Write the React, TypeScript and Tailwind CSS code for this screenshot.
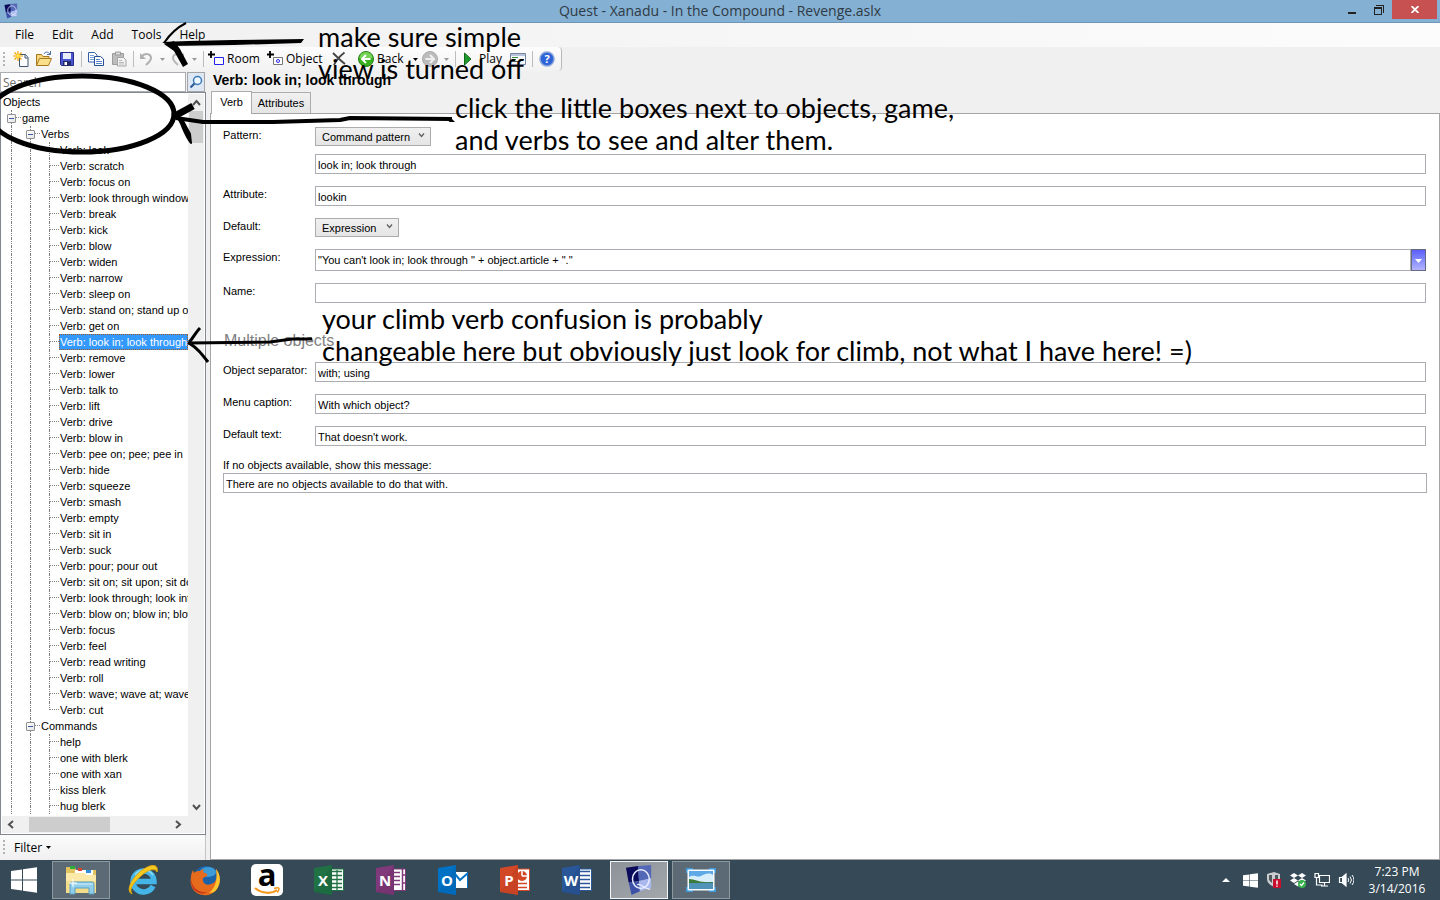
import type { ReactNode } from 'react';
import { clsx } from 'clsx';

const UI = "font-['Open_Sans','Noto_Sans',sans-serif]";
const FORM = "font-['Liberation_Sans',Arial,sans-serif]";

const verbs = [
  'look',
  'scratch',
  'focus on',
  'look through window',
  'break',
  'kick',
  'blow',
  'widen',
  'narrow',
  'sleep on',
  'stand on; stand up on',
  'get on',
  'look in; look through',
  'remove',
  'lower',
  'talk to',
  'lift',
  'drive',
  'blow in',
  'pee on; pee; pee in',
  'hide',
  'squeeze',
  'smash',
  'empty',
  'sit in',
  'suck',
  'pour; pour out',
  'sit on; sit upon; sit down',
  'look through; look into',
  'blow on; blow in; blow out',
  'focus',
  'feel',
  'read writing',
  'roll',
  'wave; wave at; wave to',
  'cut',
];

const commands = ['help', 'one with blerk', 'one with xan', 'kiss blerk', 'hug blerk'];

function QuestLogo({ className }: { className?: string }) {
  return (
    <svg viewBox="0 0 30 34" className={className} aria-hidden="true">
      <path d="M1 4 14 2 15 18 4 20Z" fill="#0b0b5c" />
      <path d="M14 2 28 1 28 15 15 18Z" fill="#5468b8" />
      <path d="M4 20 15 18 16 29 7 33Z" fill="#3c50a8" />
      <path d="M15 18 28 15 28 25 16 29Z" fill="#a9b8ee" />
      <ellipse cx="17" cy="16" rx="9" ry="10" fill="none" stroke="#e8ecff" strokeWidth="1.6" />
      <path d="M13 22c4-2 6 4 14 5" fill="none" stroke="#e8ecff" strokeWidth="1.6" />
    </svg>
  );
}

function TitleBar() {
  return (
    <header className={clsx(UI, 'flex h-[23px] shrink-0 items-start border-b border-[#6f95b5] bg-[#84b0d3]')}>
      <div className="flex w-[104px] pt-[3px] pl-[3px]">
        <QuestLogo className="h-4 w-4" />
      </div>
      <h1 className="flex-1 text-center text-[14px] leading-[22px] text-[#2f3a44]">
        Quest - Xanadu - In the Compound - Revenge.aslx
      </h1>
      <div className="flex w-[104px] justify-end pr-[3px]">
        <button aria-label="Minimize" className="flex h-[19px] w-[26px] items-center justify-center">
          <svg width="8" height="10" aria-hidden="true">
            <path d="M0 7h8v2H0z" fill="#222" />
          </svg>
        </button>
        <button aria-label="Restore" className="flex h-[19px] w-[27px] items-center justify-center">
          <svg width="10" height="10" fill="none" stroke="#222" shapeRendering="crispEdges" aria-hidden="true">
            <path d="M.5 2.5h7v7h-7zM0 3.5h8M2 .5h7.5V8" />
          </svg>
        </button>
        <button aria-label="Close" className="flex h-[19px] w-[45px] items-center justify-center bg-[#c75050]">
          <svg width="8" height="7" stroke="#fff" strokeWidth="1.8" aria-hidden="true">
            <path d="M.5 0 7.5 7M7.5 0 .5 7" />
          </svg>
        </button>
      </div>
    </header>
  );
}

function MenuBar() {
  return (
    <nav className={clsx(UI, 'flex h-6 shrink-0 items-center gap-[18px] bg-linear-to-r from-[#f0f0f0] to-[#fcfcfc] pl-[15px] text-[12px] leading-6')}>
      {['File', 'Edit', 'Add', 'Tools', 'Help'].map((item) => (
        <button key={item}>{item}</button>
      ))}
    </nav>
  );
}

function Grip() {
  return (
    <svg width="3" height="15" className="mx-[3px] shrink-0" fill="#b4b4b4" aria-hidden="true">
      <path d="M0 0h2v2H0zM0 4h2v2H0zM0 8h2v2H0zM0 12h2v2H0z" />
    </svg>
  );
}

function Caret({ color = '#000' }: { color?: string }) {
  return (
    <svg width="5" height="3" className="shrink-0" aria-hidden="true">
      <path d="M0 0h5L2.500 3z" fill={color} />
    </svg>
  );
}

function Separator() {
  return (
    <div className="flex w-[6px] shrink-0 justify-center">
      <div className="h-4 w-px bg-[#bdbdbd]" />
    </div>
  );
}

function ToolButton({ label, className, children }: { label: string; className?: string; children: ReactNode }) {
  return (
    <button title={label} aria-label={label} className={clsx('flex h-[23px] shrink-0 items-center', className ?? 'w-[23px] justify-center')}>
      {children}
    </button>
  );
}

function Icon({ children }: { children: ReactNode }) {
  return (
    <svg width="16" height="16" viewBox="0 0 16 16" className="shrink-0" fill="none" aria-hidden="true">
      {children}
    </svg>
  );
}

function Toolbar() {
  return (
    <div role="toolbar" className={clsx(UI, 'flex h-6 w-[562px] shrink-0 items-center rounded-r-sm border-r border-[#b9b9b9] bg-linear-to-b from-[#fdfdfd] to-[#f2f2f2] text-[12px]')}>
      <Grip />
      <ToolButton label="New">
        <Icon>
          <path d="M6.500 3.500h6l2.500 3v9H6.500z" fill="#fff" stroke="#3f566e" />
          <path d="M12 3.500V7h3" stroke="#3f566e" fill="#dce8f5" />
          <path d="M5 0v10M0 5h10M1.500 1.500l7 7M8.500 1.500l-7 7" stroke="#f5a300" strokeWidth="1.2" />
          <circle cx="5" cy="5" r="2" fill="#ffe14a" />
        </Icon>
      </ToolButton>
      <ToolButton label="Open">
        <Icon>
          <path d="M.5 14.500v-11h5l1.500 2h6v3" fill="#f5d67a" stroke="#a8781c" />
          <path d="M.5 14.500 3.500 7.500h12l-3 7z" fill="#fbe08c" stroke="#a8781c" />
          <path d="M8 3c1-2.500 4-2.500 6 0M14.500 0v3.500H11" stroke="#4a6f9e" />
        </Icon>
      </ToolButton>
      <ToolButton label="Save">
        <Icon>
          <path d="M1.500 1.500h13v13h-12l-1-1z" fill="#4a56cf" stroke="#262b8c" />
          <path d="M4 2h8v6H4z" fill="#e9eefb" />
          <path d="M4 10h8v5H4z" fill="#262b6c" />
          <path d="M5.500 11h2.500v3H5.500z" fill="#fff" />
        </Icon>
      </ToolButton>
      <Separator />
      <ToolButton label="Copy">
        <Icon>
          <path d="M.5 1.500h6l2.500 2.500v7H.5z" fill="#fff" stroke="#3560a8" />
          <path d="M2 4.500h4M2 6.500h5M2 8.500h5" stroke="#7ba0dc" />
          <path d="M6.500 5.500h6L15.500 8v6.500h-9z" fill="#fff" stroke="#274f99" />
          <path d="M8 8.500h4M8 10.500h6M8 12.500h6" stroke="#5884cc" />
        </Icon>
      </ToolButton>
      <ToolButton label="Paste">
        <Icon>
          <path d="M1.500 2.500h11v11h-11z" fill="#bdbdbd" stroke="#9c9c9c" />
          <path d="M4.500 1h5v3h-5z" fill="#ddd" stroke="#999" />
          <path d="M6.500 6.500h6l2.500 2.500v6H6.500z" fill="#f2f2f2" stroke="#a5a5a5" />
          <path d="M8 9.500h3M8 11.500h5M8 13h5" stroke="#bbb" />
        </Icon>
      </ToolButton>
      <Separator />
      <ToolButton label="Undo" className="w-8 gap-[6px] pl-[2px]">
        <Icon>
          <path d="M3 6C7 1 13 3 13 7c0 3-3 5-5 7" stroke="#b0b0b0" strokeWidth="2" />
          <path d="M2 2v6h6z" fill="#b0b0b0" />
        </Icon>
        <Caret color="#9a9a9a" />
      </ToolButton>
      <ToolButton label="Redo" className="w-8 gap-[6px] pl-[2px]">
        <Icon>
          <path d="M13 6C9 1 3 3 3 7c0 3 3 5 5 7" stroke="#b8b8b8" strokeWidth="2" />
          <path d="M14 2v6H8z" fill="#b8b8b8" />
        </Icon>
        <Caret color="#9a9a9a" />
      </ToolButton>
      <Separator />
      <ToolButton label="Add room" className="w-[59px] gap-[3px] pl-[2px]">
        <Icon>
          <path d="M3 0v7M0 3.500h7" stroke="#000" strokeWidth="1.800" />
          <path d="M6.500 6.500h9v7h-9z" fill="#fff" stroke="#2222f0" />
        </Icon>
        Room
      </ToolButton>
      <ToolButton label="Add object" className="w-[62px] gap-[3px] pl-[2px]">
        <Icon>
          <path d="M3 0v7M0 3.500h7" stroke="#000" strokeWidth="1.800" />
          <path d="M6.500 6.500h9v7h-9z" fill="#fff" stroke="#777" />
          <circle cx="11" cy="10" r="1.500" stroke="#2222f0" />
        </Icon>
        Object
      </ToolButton>
      <ToolButton label="Delete">
        <Icon>
          <path d="M2 2c4 4 8 8 12 11M13.500 1.500C9 5 5 9 3 14" stroke="#444" strokeWidth="1.800" />
        </Icon>
      </ToolButton>
      <ToolButton label="Back" className="ml-[6px] w-[62px] gap-[3px] pl-[2px]">
        <Icon>
          <circle cx="8" cy="8" r="7.500" fill="#38b01e" stroke="#26821a" />
          <path d="M1.500 7a6.500 6 0 0 1 13 0z" fill="#74d354" />
          <path d="M12.500 8H4.500M8 4 4 8l4 4" stroke="#fff" strokeWidth="2" />
        </Icon>
        <span className="flex-1 text-left">Back</span>
        <Caret />
      </ToolButton>
      <ToolButton label="Forward" className="w-[34px] gap-[6px] pl-1">
        <Icon>
          <circle cx="8" cy="8" r="7.500" fill="#bcbcbc" stroke="#a9a9a9" />
          <path d="M3.500 8h8M8 4l4 4-4 4" stroke="#f0f0f0" strokeWidth="2" />
        </Icon>
        <Caret color="#9a9a9a" />
      </ToolButton>
      <Separator />
      <ToolButton label="Play" className="w-[48px] gap-[3px] pl-[2px]">
        <Icon>
          <path d="M4.500 2 11 8l-6.500 6z" fill="#1f9a2d" stroke="#106b1c" />
        </Icon>
        Play
      </ToolButton>
      <ToolButton label="Log">
        <Icon>
          <path d="M.5 2.500h15v11H.5z" fill="#f5f8ff" stroke="#7885a0" />
          <path d="M1 3h14v2H1z" fill="#b8c5dc" />
          <path d="M2 6.500h6M2 8.500h4" stroke="#3c8a3c" />
          <path d="M2 10.500h7M10 8.500h4" stroke="#555" />
        </Icon>
      </ToolButton>
      <Separator />
      <ToolButton label="Help">
        <Icon>
          <circle cx="8" cy="8" r="7" fill="#2e63d8" stroke="#8aa5d8" strokeWidth="1.500" />
          <text x="8" y="12" textAnchor="middle" fontSize="11" fontWeight="bold" fill="#fff">?</text>
        </Icon>
      </ToolButton>
    </div>
  );
}

/* One 19px column of the tree's dotted guide lines */
function Guide({ top, bottom, branch, box }: { top?: boolean; bottom?: boolean; branch?: boolean; box?: boolean }) {
  return (
    <span className="relative flex h-4 w-[19px] shrink-0 pl-[9px]">
      <span className="flex flex-1 flex-col">
        <span className={clsx('h-2 border-dotted border-[#808080]', top && 'border-l', branch && 'border-b')} />
        <span className={clsx('h-2 border-dotted border-[#808080]', bottom && 'border-l')} />
      </span>
      {box && (
        <button aria-label="Collapse" className="absolute top-1 left-[5px] flex h-[9px] w-[9px] items-center justify-center rounded-[1px] border border-[#919191] bg-linear-to-br from-white to-[#e4e4e4]">
          <span className="h-px w-[5px] bg-[#3c5a9e]" />
        </button>
      )}
    </span>
  );
}

function TreeLeaf({ text, last, selected }: { text: string; last?: boolean; selected?: boolean }) {
  return (
    <li className="flex h-4 leading-4 whitespace-nowrap">
      <Guide top bottom />
      <Guide top bottom />
      <Guide top branch bottom={!last} />
      <span className={clsx('px-px', selected && 'bg-[#3399ff] text-white outline outline-dotted -outline-offset-1 outline-[#a8581c]')}>
        {text}
      </span>
    </li>
  );
}

function Chevron({ d }: { d: string }) {
  return (
    <svg width="9" height="9" fill="none" stroke="#505050" strokeWidth="2" className="shrink-0" aria-hidden="true">
      <path d={d} />
    </svg>
  );
}

function Sidebar() {
  return (
    <aside className="flex w-[206px] shrink-0 flex-col">
      <div className="mt-px flex h-5 shrink-0 gap-px">
        <input
          type="search"
          aria-label="Search"
          placeholder="Search"
          className={clsx(UI, 'h-5 w-[186px] border border-[#abadb3] bg-white px-[2px] text-[12px] placeholder:text-[#6d6d6d]')}
        />
        <button aria-label="Run search" className="flex h-5 w-[18px] items-center justify-center border border-[#a5a5a5] bg-[#dde8f4]">
          <svg width="14" height="14" fill="none" aria-hidden="true">
            <circle cx="8.500" cy="5.500" r="4" stroke="#3a78b8" strokeWidth="1.500" fill="#eef6ff" />
            <path d="M5.500 8.500 1.500 12.500" stroke="#2b5c98" strokeWidth="2.200" />
          </svg>
        </button>
      </div>
      <div className="flex min-h-0 flex-1 flex-col border border-[#828790] bg-white p-px">
        <div className="flex min-h-0 flex-1">
          <ul className={clsx(FORM, 'min-w-0 flex-1 overflow-hidden text-[11px]')}>
            <li className="h-4 pl-px leading-4">Objects</li>
            <li className="flex h-4 leading-4">
              <Guide top bottom branch box />
              <span className="pl-px">game</span>
            </li>
            <li className="flex h-4 leading-4">
              <Guide top bottom />
              <Guide top bottom branch box />
              <span className="pl-px">Verbs</span>
            </li>
            {verbs.map((verb) => (
              <TreeLeaf
                key={verb}
                text={`Verb: ${verb}`}
                selected={verb === 'look in; look through'}
                last={verb === 'cut'}
              />
            ))}
            <li className="flex h-4 leading-4">
              <Guide top bottom />
              <Guide top bottom branch box />
              <span className="pl-px">Commands</span>
            </li>
            {commands.map((command) => (
              <TreeLeaf key={command} text={command} />
            ))}
          </ul>
          <div className="flex w-4 shrink-0 flex-col items-center justify-between bg-[#f0f0f0] pt-1 pb-1">
            <div className="flex w-full flex-col items-center gap-1">
              <Chevron d="M1 7l3.500-4L8 7" />
              <div className="h-8 w-[14px] bg-[#cdcdcd]" />
            </div>
            <Chevron d="M1 2l3.500 4L8 2" />
          </div>
        </div>
        <div className="flex h-[17px] shrink-0 items-center bg-[#f0f0f0] pr-[21px] pl-1">
          <Chevron d="M7 1 3 4.500 7 8" />
          <div className="ml-[14px] h-[15px] w-[81px] bg-[#cdcdcd]" />
          <div className="ml-auto flex">
            <Chevron d="M2 1l4 3.500L2 8" />
          </div>
        </div>
      </div>
      <div className={clsx(UI, 'flex h-[25px] shrink-0 items-center border-r border-[#c4c4c4] bg-linear-to-b from-[#fbfbfb] to-[#f0f0f0] text-[12px]')}>
        <Grip />
        <button className="flex items-center gap-1 pl-[5px]">
          Filter
          <Caret />
        </button>
      </div>
    </aside>
  );
}

function FieldRow({ id, label, children }: { id: string; label: string; children: ReactNode }) {
  return (
    <div className="flex items-start">
      <label htmlFor={id} className="w-[92px] shrink-0 leading-4">
        {label}
      </label>
      {children}
    </div>
  );
}

function TextField({ id, value, label }: { id: string; value: string; label?: string }) {
  return (
    <input
      id={id}
      aria-label={label}
      defaultValue={value}
      className="h-5 w-full min-w-0 border border-[#abadb3] bg-white px-[2px] pt-px"
    />
  );
}

function Dropdown({ id, value, options, className }: { id: string; value: string; options: string[]; className: string }) {
  return (
    <div className={clsx('relative flex', className)}>
      <select
        id={id}
        defaultValue={value}
        className="h-[19px] w-full appearance-none border border-[#acacac] bg-linear-to-b from-[#f0f0f0] to-[#e5e5e5] pt-px pl-[6px]"
      >
        {options.map((option) => (
          <option key={option}>{option}</option>
        ))}
      </select>
      <svg width="7" height="5" className="pointer-events-none absolute top-[6px] right-[6px]" fill="none" stroke="#606060" strokeWidth="1.300" aria-hidden="true">
        <path d="M1 .5l2.500 3L6 .5" />
      </svg>
    </div>
  );
}

function VerbEditor() {
  return (
    <main className={clsx(FORM, 'ml-1 flex min-w-0 flex-1 flex-col text-[11px]')}>
      <h2 className="h-5 pl-[3px] text-[14px] leading-[19px] font-bold">Verb: look in; look through</h2>
      <div role="tablist" className="flex h-[22px] items-end pl-px">
        <button role="tab" aria-selected="true" className="relative z-10 -mb-px h-[23px] w-[41px] border border-b-0 border-[#acacac] bg-white pb-px">
          Verb
        </button>
        <button role="tab" aria-selected="false" className="h-[21px] w-[59px] border border-b-0 border-l-0 border-[#acacac] bg-linear-to-b from-[#f0f0f0] to-[#e5e5e5]">
          Attributes
        </button>
      </div>
      <form className="flex min-h-0 flex-1 flex-col gap-3 border border-[#a5a5a5] bg-white pt-[13px] pr-[13px] pl-3">
        <FieldRow id="pattern-type" label="Pattern:">
          <div className="flex flex-1 flex-col gap-2">
            <Dropdown id="pattern-type" value="Command pattern" options={['Command pattern', 'Regular expression']} className="w-[116px]" />
            <TextField id="pattern" label="Pattern text" value="look in; look through" />
          </div>
        </FieldRow>
        <FieldRow id="attribute" label="Attribute:">
          <TextField id="attribute" value="lookin" />
        </FieldRow>
        <FieldRow id="default" label="Default:">
          <Dropdown id="default" value="Expression" options={['Expression', 'Text', 'Script']} className="w-[84px]" />
        </FieldRow>
        <FieldRow id="expression" label="Expression:">
          <div className="flex h-[22px] flex-1">
            <input
              id="expression"
              defaultValue={'"You can\'t look in; look through " + object.article + "."'}
              className="min-w-0 flex-1 border border-[#abadb3] bg-white px-[2px] pt-px"
            />
            <button type="button" aria-label="Insert" className="flex w-[15px] items-center justify-center border border-[#666a80] bg-linear-to-b from-[#5c5cf8] to-[#b4b4ff] pt-[2px]">
              <svg width="7" height="4" aria-hidden="true">
                <path d="M0 0h7L3.500 4z" fill="#fff" />
              </svg>
            </button>
          </div>
        </FieldRow>
        <FieldRow id="name" label="Name:">
          <TextField id="name" value="" />
        </FieldRow>
        <h3 className="h-[35px] pt-[15px] pl-px text-[16px] leading-[22px] text-[#808080]">Multiple objects</h3>
        <FieldRow id="separator" label="Object separator:">
          <TextField id="separator" value="with; using" />
        </FieldRow>
        <FieldRow id="caption" label="Menu caption:">
          <TextField id="caption" value="With which object?" />
        </FieldRow>
        <FieldRow id="default-text" label="Default text:">
          <TextField id="default-text" value="That doesn't work." />
        </FieldRow>
        <div className="-mr-px flex flex-col">
          <label htmlFor="no-objects" className="leading-[15px]">
            If no objects available, show this message:
          </label>
          <TextField id="no-objects" value="There are no objects available to do that with." />
        </div>
      </form>
    </main>
  );
}

function OfficeIcon({ letter, color, dark, children }: { letter: string; color: string; dark: string; children: ReactNode }) {
  return (
    <svg width="30" height="32" viewBox="0 0 30 32" aria-hidden="true">
      <path d="M17 5h12.500v21.500H17z" fill="#fff" stroke={color} />
      {children}
      <path d="M0 4 18 1v30L0 28z" fill={color} />
      <path d="M18 1v30L0 28z" fill={dark} opacity=".3" />
      <text x="9" y="21.500" textAnchor="middle" fontSize="15" fontWeight="bold" fill="#fff">
        {letter}
      </text>
    </svg>
  );
}

function TaskButton({ label, tile, children }: { label: string; tile?: 'open' | 'active'; children: ReactNode }) {
  return (
    <button
      aria-label={label}
      className={clsx(
        'flex h-[38px] w-[58px] shrink-0 items-center justify-center border',
        !tile && 'border-transparent',
        tile === 'open' && 'border-[#8d989f] bg-[#5b6a74]',
        tile === 'active' && 'border-[#f2f4f5] bg-linear-to-br from-[#8c9297] to-[#a3a8ad]',
      )}
    >
      {children}
    </button>
  );
}

function Pane({ size }: { size: number }) {
  return (
    <svg width={size} height={size} viewBox="0 0 26 26" fill="#fff" aria-hidden="true">
      <path d="M0 4 11 2.500v10H0zM12 2.300 26 .3v12.200H12zM0 13.500h11v10L0 22zM12 13.500h14v12.200L12 23.700z" />
    </svg>
  );
}

function Taskbar() {
  return (
    <footer className={clsx(UI, 'flex h-10 shrink-0 items-center gap-1 bg-[#354957] text-white')}>
      <button aria-label="Start" className="flex h-10 w-12 items-center justify-center">
        <Pane size={26} />
      </button>
      <TaskButton label="File Explorer" tile="open">
        <svg width="32" height="30" viewBox="0 0 32 30" aria-hidden="true">
          <path d="M1 3q0-1 1-1h8l1 3h20v22H1z" fill="#e2c35e" />
          <path d="M5 1h5v3H5z" fill="#2fae3c" />
          <path d="M10 5h18v5H10z" fill="#fff" />
          <path d="M13 3h4v3h-4z" fill="#d8452e" />
          <path d="M21 5h5v3h-5z" fill="#2f8fd8" />
          <path d="M1 8h18l2 2h10v18H1z" fill="#f3dc8a" />
          <path d="M1 8h18l2 2h10v6H1z" fill="#fae9a8" />
          <path d="M5 29V19q0-2 2-2h20q2 0 2 2v10h-5v-6H10v6z" fill="#8fcdea" stroke="#5ba0c4" />
          <path d="M6 19h22" stroke="#d4f0fc" />
          <path d="M8 14v8M4 18h8" stroke="#fff" />
        </svg>
      </TaskButton>
      <TaskButton label="Internet Explorer">
        <svg width="32" height="32" viewBox="0 0 32 32" fill="none" aria-hidden="true">
          <path d="M26 22A10.500 10.500 0 1 1 27 17.500H9" stroke="#45b5e8" strokeWidth="5.500" />
          <path d="M26 11A11 11 0 0 0 8 11" stroke="#8bdcf8" strokeWidth="1.500" />
          <path d="M5 30C-2 27 5 14 14 7S32-1 30 8c-1-4-8-3-15 3S1 25 5 30z" fill="#f5c922" stroke="#e0a80c" />
        </svg>
      </TaskButton>
      <TaskButton label="Firefox">
        <svg width="30" height="31" viewBox="0 0 30 31" aria-hidden="true">
          <circle cx="16" cy="14" r="13" fill="#1c62a8" />
          <ellipse cx="18" cy="7" rx="8" ry="5" fill="#3d9bd8" />
          <path d="M26 4c5 6 5 15 0 21-3 4-8 6-13 5C4 29-1 21 1 12c0-3 1-5 2-7l1 3c2-2 4-2 6-2 1-1 3-2 4-2-1 2-1 3 0 4 2 0 4 1 3 3l-4 2c-1 5 3 8 8 6 5-1 7-7 5-15z" fill="#e66b1d" />
          <path d="M26 4c5 6 5 14 1 20-2 3-5 4-8 4 6-5 9-13 7-24z" fill="#fbc52d" />
          <path d="M1 14c1 9 8 14 16 13-5 4-17 0-16-13z" fill="#c7371c" />
        </svg>
      </TaskButton>
      <TaskButton label="Amazon">
        <svg width="32" height="32" viewBox="0 0 32 32" aria-hidden="true">
          <rect width="32" height="32" rx="5" fill="#fff" />
          <text x="16" y="22" textAnchor="middle" fontSize="31" fontWeight="bold" fill="#000">a</text>
          <path d="M4 24c7 6 17 6 22 2" fill="none" stroke="#f7981d" strokeWidth="2.200" />
          <path d="M23 24.500c3-1 5-1 5 0s-1 3-2 4" fill="none" stroke="#f7981d" strokeWidth="1.500" />
        </svg>
      </TaskButton>
      <TaskButton label="Excel">
        <OfficeIcon letter="X" color="#207245" dark="#185c37">
          <path d="M18 7.500h10M18 11.500h10M18 15.500h10M18 19.500h10M18 23.500h10M23 6v20" stroke="#207245" strokeWidth="1.300" />
        </OfficeIcon>
      </TaskButton>
      <TaskButton label="OneNote">
        <OfficeIcon letter="N" color="#80397b" dark="#66295f">
          <path d="M18 8.500h6M18 12.500h6M18 16.500h6M18 20.500h6M26.500 5v22M27 11h3M27 19h3" stroke="#80397b" strokeWidth="1.500" />
        </OfficeIcon>
      </TaskButton>
      <TaskButton label="Outlook">
        <OfficeIcon letter="O" color="#0072c6" dark="#005a9e">
          <path d="M17 3h13v5H17zM17 24h13v5H17z" fill="#354957" />
          <path d="M17 10l5 6 8-7" stroke="#0072c6" strokeWidth="2" fill="none" />
        </OfficeIcon>
      </TaskButton>
      <TaskButton label="PowerPoint">
        <OfficeIcon letter="P" color="#d24726" dark="#b03a1e">
          <circle cx="22" cy="12" r="5" fill="#d24726" />
          <path d="M22 12V7M22 12h5" stroke="#fff" strokeWidth="1.500" />
          <path d="M18 19.500h9M18 23.500h9" stroke="#d24726" strokeWidth="1.500" />
        </OfficeIcon>
      </TaskButton>
      <TaskButton label="Word">
        <OfficeIcon letter="W" color="#2a579a" dark="#1e4178">
          <path d="M18 7.500h10M18 11.500h10M18 15.500h10M18 19.500h10M18 23.500h10" stroke="#2a579a" strokeWidth="1.500" />
        </OfficeIcon>
      </TaskButton>
      <TaskButton label="Quest" tile="active">
        <QuestLogo className="h-8 w-7" />
      </TaskButton>
      <TaskButton label="Picture viewer" tile="open">
        <svg width="30" height="24" viewBox="0 0 30 24" aria-hidden="true">
          <path d="M0 0h7v5H0zM23 0h7v5h-7zM0 19h7v5H0zM23 19h7v5h-7z" fill="#3f9bdc" />
          <rect x="1.500" y="1.500" width="27" height="21" rx="1" fill="#f6fbff" />
          <path d="M3 3h24v18H3z" fill="#5fa9e6" />
          <path d="M3 9c6-3 8 1 12-1s8-4 12-1v7H3z" fill="#d8eefb" />
          <path d="M3 11c6 0 10 4 24 3v2H3z" fill="#3c7a3c" />
          <path d="M3 15h24v6H3z" fill="#4f93b8" />
        </svg>
      </TaskButton>
      <div className="ml-auto flex items-center pr-1">
        <button aria-label="Show hidden icons" className="flex w-6 justify-center">
          <svg width="8" height="4" aria-hidden="true">
            <path d="M0 4h8L4 0z" fill="#fff" />
          </svg>
        </button>
        <span className="flex w-6 justify-center">
          <Pane size={15} />
        </span>
        <span className="flex w-6 justify-center">
          <Icon>
            <path d="M1 2 8 0l6 2v5c0 4-3 6-6 8-4-2-7-4-7-8z" fill="#c9cdd0" />
            <path d="M3 3h3v8L3 8zM9 3h3v4H9z" fill="#50585e" />
            <path d="M7 7h8v9H7z" fill="#c8102e" />
            <path d="M11 8.500v4M11 13.500v1.300" stroke="#fff" strokeWidth="1.500" />
          </Icon>
        </span>
        <span className="flex w-6 justify-center">
          <Icon>
            <path d="M4 1 8 3.500 4 6 0 3.500zM12 1l4 2.500L12 6 8 3.500zM4 6l4 2.500L4 11 0 8.500zM12 6l4 2.500-4 2.500-4-2.500zM4 12l4-2.500L12 12l-4 2.500z" fill="#fff" />
            <circle cx="12" cy="12" r="4" fill="#35b34a" />
            <path d="M10 12l1.500 1.500L14 10.500" stroke="#fff" strokeWidth="1.300" />
          </Icon>
        </span>
        <span className="flex w-6 justify-center">
          <Icon>
            <path d="M5.500 3.500h10v7h-10zM10.500 10.500v3M7 14h7M1 1.500h3.500v4H1zM2.500 5.500V13h6" stroke="#fff" strokeWidth="1.200" />
          </Icon>
        </span>
        <span className="flex w-6 justify-center">
          <Icon>
            <path d="M1.500 5.500H4L8 2v12L4 10.500H1.500z" stroke="#fff" strokeWidth="1.200" />
            <path d="M4 5.500 8 2v12L4 10.500z" fill="#fff" />
            <path d="M10 6q1.500 2 0 4M12 4.500q3 3.500 0 7M14 3q4 5 0 10" stroke="#fff" />
          </Icon>
        </span>
        <div className="w-[78px] text-center text-[12px] leading-[17px]">
          <div>7:23 PM</div>
          <div>3/14/2016</div>
        </div>
      </div>
    </footer>
  );
}

/* Pen strokes and handwritten notes drawn over the window */
function Annotations() {
  const note = "absolute text-[27px] leading-[32px] whitespace-nowrap font-['Lato',sans-serif]";
  return (
    <div className="pointer-events-none absolute inset-0 z-20 overflow-hidden text-black">
      <svg width="480" height="380" className="absolute top-0 left-0" fill="none" stroke="#000" strokeLinejoin="round" aria-hidden="true">
        <ellipse cx="82" cy="114" rx="92" ry="38" strokeWidth="5" />
        <path d="M162 42 188 41 233 40 304 39 301 43 234 45 170 46z" fill="#000" stroke="none" />
        <path d="M164 43c6-9 12-15 22-20" strokeWidth="2" />
        <path d="M164 44l10-3 6 8 8 15-5 3-9-16z" fill="#000" stroke="none" />
        <path d="M176 118l27 4h70l67-2 10-2 102 1" strokeWidth="4" />
        <path d="M450 117l5 5h-6z" fill="#000" stroke="none" />
        <path d="M173 117l20-11" strokeWidth="7" />
        <path d="M179 120c3 4 5 14 12 23l-1-9-8-15z" fill="#000" strokeWidth="2" />
        <path d="M188 343l82-1 22-3h20" strokeWidth="3" />
        <path d="M189 342c3-2 6-9 11-14" strokeWidth="3" />
        <path d="M189 343c8 5 12 10 19 19" strokeWidth="3" />
      </svg>
      <p className={clsx(note, 'top-[21px] left-[318px]')}>
        make sure simple
        <br />
        view is turned off
      </p>
      <p className={clsx(note, 'top-[92px] left-[455px]')}>
        click the little boxes next to objects, game,
        <br />
        and verbs to see and alter them.
      </p>
      <p className={clsx(note, 'top-[303px] left-[322px]')}>
        your climb verb confusion is probably
        <br />
        changeable here but obviously just look for climb, not what I have here! =)
      </p>
    </div>
  );
}

export default function App() {
  return (
    <div className="relative flex h-screen flex-col overflow-hidden bg-[#f0f0f0] text-black">
      <TitleBar />
      <MenuBar />
      <Toolbar />
      <div className="flex min-h-0 flex-1">
        <Sidebar />
        <VerbEditor />
      </div>
      <Taskbar />
      <Annotations />
    </div>
  );
}
